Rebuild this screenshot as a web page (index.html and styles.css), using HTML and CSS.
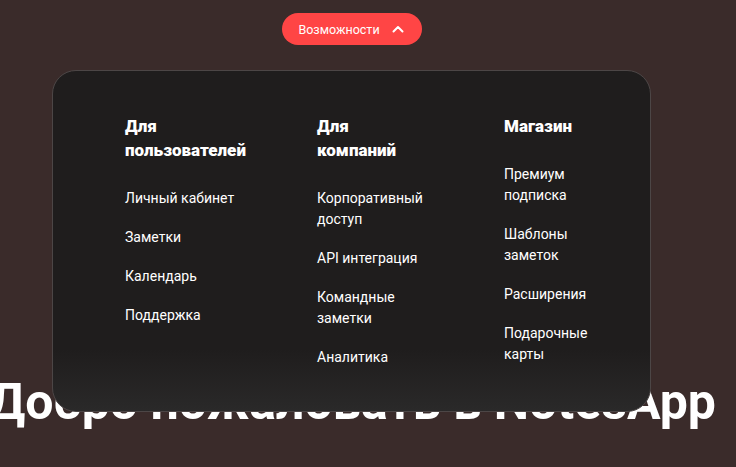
FILE: index.html
```html
<!DOCTYPE html>
<html lang="ru">
<head>
<meta charset="utf-8">
<title>NotesApp</title>
<link rel="stylesheet" href="styles.css">
</head>
<body>
<div class="page">
  <nav class="nav">
    <button class="features-btn" type="button">
      <span>Возможности</span>
      <svg class="chev" width="12" height="8" viewBox="0 0 12 8" aria-hidden="true"><path d="M1.5 6.5 L6 2 L10.5 6.5" fill="none" stroke="#fff" stroke-width="2" stroke-linecap="round" stroke-linejoin="round"/></svg>
    </button>
    <div class="dropdown">
      <div class="col">
        <h3 class="col-title">Для пользователей</h3>
        <ul class="links">
          <li>Личный кабинет</li>
          <li>Заметки</li>
          <li>Календарь</li>
          <li>Поддержка</li>
        </ul>
      </div>
      <div class="col">
        <h3 class="col-title">Для компаний</h3>
        <ul class="links">
          <li>Корпоративный доступ</li>
          <li>API интеграция</li>
          <li>Командные заметки</li>
          <li>Аналитика</li>
        </ul>
      </div>
      <div class="col">
        <h3 class="col-title">Магазин</h3>
        <ul class="links">
          <li>Премиум подписка</li>
          <li>Шаблоны заметок</li>
          <li>Расширения</li>
          <li>Подарочные карты</li>
        </ul>
      </div>
    </div>
  </nav>
  <section class="hero">
    <h1 class="hero-title">Добро пожаловать в NotesApp</h1>
  </section>
</div>
</body>
</html>
```

FILE: styles.css
```css
html, body {
  margin: 0;
  padding: 0;
}
body {
  background: #3a2b2a;
  font-family: Roboto, "Noto Sans", "Liberation Sans", sans-serif;
  color: #fff;
  height: 467px;
  overflow: hidden;
}
.page {
  width: 704px;
  position: relative;
}
.nav {
  display: flex;
  justify-content: center;
  padding-top: 13px;
  position: relative;
}
.features-btn {
  display: flex;
  align-items: center;
  gap: 12px;
  height: 32px;
  padding: 0 18px 0 16px;
  border: 0;
  border-radius: 16px;
  background: #ff4545;
  color: #fff;
  font-family: Roboto, "Noto Sans", sans-serif;
  font-size: 12.5px;
  cursor: pointer;
}
.chev {
  display: block;
}
.dropdown {
  position: absolute;
  top: 70px;
  left: 52px;
  width: 599px;
  height: 342px;
  box-sizing: border-box;
  border: 1px solid #4c4646;
  border-radius: 24px;
  background: linear-gradient(to bottom, #1f1d1d 0%, #1f1d1d 82%, #2a2929 100%);
  display: grid;
  grid-template-columns: 192px 187px 1fr;
  padding: 43px 0 0 72px;
  z-index: 2;
}
.col {
  max-width: 112px;
}
.col-title {
  margin: 0;
  font-size: 17px;
  font-weight: 900;
  line-height: 24px;
}
.links {
  list-style: none;
  margin: 26px 0 0;
  padding: 0;
  display: flex;
  flex-direction: column;
  gap: 18px;
  font-size: 14px;
  line-height: 21px;
}
.hero {
  display: flex;
  justify-content: center;
  margin-top: 328px;
}
.hero-title {
  margin: 0;
  white-space: nowrap;
  font-size: 50px;
  font-weight: 700;
  line-height: 58px;
  color: #fff;
}
```
